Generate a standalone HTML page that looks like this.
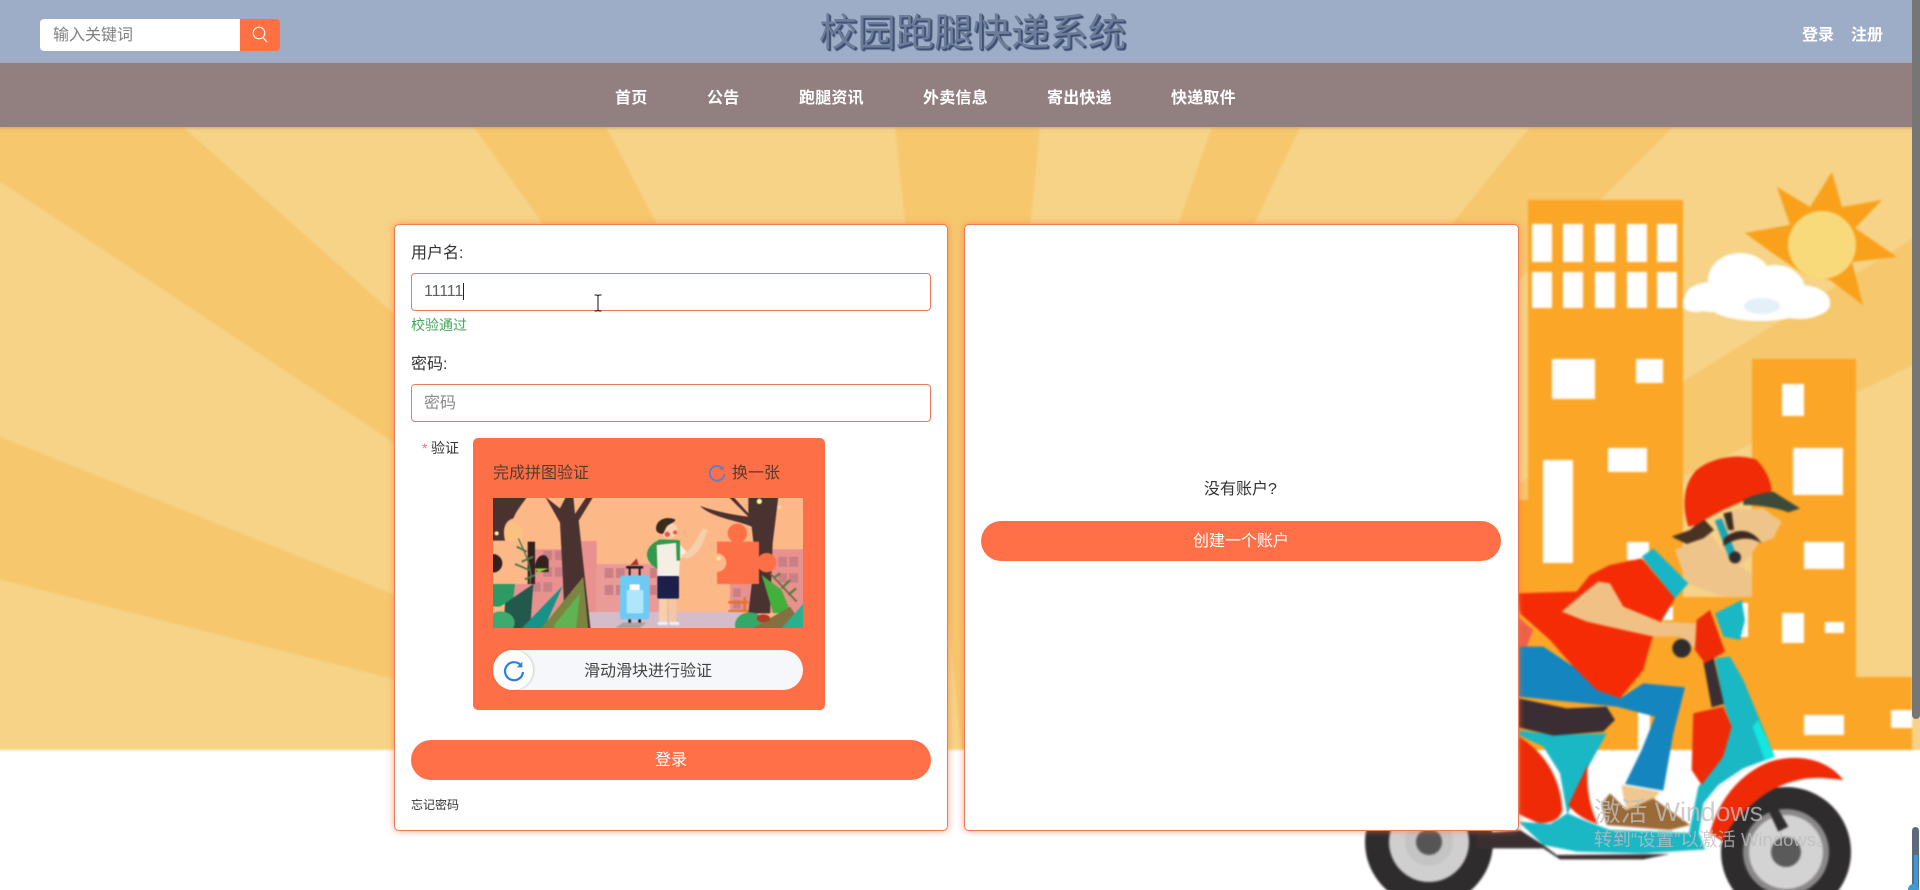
<!DOCTYPE html>
<html lang="zh-CN">
<head>
<meta charset="utf-8">
<title>校园跑腿快递系统</title>
<style>
html,body{margin:0;padding:0;width:1920px;height:890px;overflow:hidden;background:#fff;font-family:"Liberation Sans","Noto Sans CJK SC",sans-serif;}
.a{position:absolute;white-space:nowrap;}
.t{position:absolute;white-space:nowrap;line-height:24px;height:24px;}
#bg{position:absolute;left:0;top:0;}
#hd{position:absolute;left:0;top:0;width:1920px;height:63px;background:#9eadc7;}
#nv{position:absolute;left:0;top:63px;width:1920px;height:64px;background:#928080;box-shadow:0 1px 3px rgba(120,90,70,.35);}
.nav{color:#fff;font-weight:700;font-size:16px;top:87px;letter-spacing:.2px;}
.card{position:absolute;top:224px;height:605px;background:#fff;border:1px solid #ea7a58;border-radius:5px;box-shadow:0 0 7px rgba(255,112,67,.65);box-sizing:content-box;}
.inp{position:absolute;left:411px;width:518px;height:36px;border:1px solid #e8795a;border-radius:4px;background:#fff;}
.btn{position:absolute;height:40px;background:#ff7048;border-radius:20px;color:#fff;font-size:16px;line-height:42px;text-align:center;}
</style>
</head>
<body>
<svg id="bg" width="1920" height="890" viewBox="0 0 1920 890" xmlns="http://www.w3.org/2000/svg">
<g style="filter:blur(1px)">
<rect x="-5" y="100" width="1930" height="650" fill="#f6d386"/>
<g fill="#f6c76d">
<polygon points="970,825 183,127 -5,127 -5,178"/>
<polygon points="970,825 -5,435 -5,578"/>
<polygon points="970,825 474,127 606,127"/>
<polygon points="970,825 895,127 1040,127"/>
<polygon points="970,825 1212,127 1300,127"/>
<polygon points="970,825 1530,127 1673,127"/>
<polygon points="970,825 1925,231 1925,359"/>
</g>
<rect x="-5" y="750" width="1930" height="140" fill="#fff"/>
<!-- sun -->
<polygon fill="#f9a11b" points="1832,172 1842,207 1882,200 1855,228 1897,257 1852,262 1863,305 1830,280 1805,275 1775,255 1745,233 1790,225 1777,187 1810,207"/>
<circle cx="1822" cy="245" r="34" fill="#f9da7a"/>
<!-- cloud -->
<g fill="#fff">
<ellipse cx="1740" cy="280" rx="32" ry="27"/><ellipse cx="1775" cy="290" rx="30" ry="25"/><ellipse cx="1800" cy="302" rx="30" ry="17"/><ellipse cx="1712" cy="297" rx="27" ry="15"/><ellipse cx="1696" cy="303" rx="15" ry="9"/><ellipse cx="1760" cy="306" rx="50" ry="15"/><ellipse cx="1812" cy="304" rx="18" ry="12"/>
</g>
<ellipse cx="1762" cy="306" rx="18" ry="8" fill="#e4f0f8"/>
<!-- buildings -->
<g fill="#fba626">
<rect x="1528" y="200" width="155" height="550"/>
<rect x="1752" y="359" width="104" height="391"/>
<rect x="1500" y="597" width="356" height="153"/>
<rect x="1856" y="677" width="56" height="73"/>
<rect x="1500" y="500" width="30" height="250"/>
</g>
<g fill="#fff">
<rect x="1532" y="224" width="20" height="38"/><rect x="1563" y="224" width="20" height="38"/><rect x="1595" y="224" width="20" height="38"/><rect x="1627" y="224" width="20" height="38"/><rect x="1657" y="224" width="20" height="38"/>
<rect x="1532" y="272" width="20" height="36"/><rect x="1563" y="272" width="20" height="36"/><rect x="1595" y="272" width="20" height="36"/><rect x="1627" y="272" width="20" height="36"/><rect x="1657" y="272" width="20" height="36"/>
<rect x="1552" y="359" width="43" height="40"/><rect x="1636" y="359" width="27" height="24"/>
<rect x="1543" y="460" width="30" height="103"/><rect x="1608" y="448" width="39" height="24"/>
<rect x="1782" y="384" width="22" height="32"/><rect x="1793" y="448" width="50" height="47"/>
<rect x="1804" y="542" width="40" height="27"/><rect x="1782" y="613" width="22" height="30"/><rect x="1825" y="622" width="19" height="11"/>
<rect x="1804" y="715" width="40" height="20"/><rect x="1891" y="710" width="21" height="18"/>
<rect x="1627" y="542" width="22" height="18"/><rect x="1638" y="712" width="12" height="38"/><rect x="1662" y="607" width="11" height="13"/><rect x="1738" y="603" width="10" height="34"/>
</g>
<!-- wheels -->
<circle cx="1429" cy="842" r="64" fill="#2f2c2e"/><circle cx="1429" cy="842" r="40" fill="#d0cfcf"/><circle cx="1429" cy="842" r="24" fill="#c5c4c4"/><circle cx="1429" cy="842" r="13" fill="#555"/>
<circle cx="1786" cy="852" r="65" fill="#2f2c2e"/><circle cx="1786" cy="852" r="43" fill="#8a8888"/><circle cx="1786" cy="852" r="37" fill="#d4d3d3"/><circle cx="1786" cy="852" r="15" fill="#5b5a5a"/>
<!-- rider: coordinates are 3x around (1510,450) -->
<g transform="translate(1510,450) scale(.33333)">
<path fill="#3a2f30" d="M-100 1150 L30 1140 L100 1185 L140 1215 L480 1212 L400 1228 L150 1228 L100 1195 L-100 1195Z"/>
<path fill="#2f2c2e" d="M770 1070 L800 1070 L835 1130 L805 1145Z"/>
<!-- teal body -->
<path fill="#1ab8c4" d="M25 840 L130 855 L290 850 L230 960 L172 1095 L150 970 L100 890 L25 855Z"/>
<path fill="#1ab8c4" d="M25 1115 L120 1122 L172 1090 L240 1118 L300 1140 L560 1150 L585 1198 L400 1210 L200 1205 L100 1185Z"/>
<path fill="#1ab8c4" d="M615 625 L660 620 L700 690 L795 920 L700 955 L625 1005 L580 1060 L567 1150 L585 1198 L535 1160 L565 1010 L640 920 L665 830 L640 760Z"/>
<path fill="#16e6e0" d="M745 810 L795 920 L765 932 L728 830Z"/>
<!-- column -->
<polygon fill="#3a2f33" points="580,635 610,620 642,762 605,772"/>
<!-- reds -->
<path fill="#ef2a06" d="M25 860 C80 890 150 960 157 1080 C150 1112 110 1125 80 1117 L25 1092Z"/>
<path fill="#ef2a06" d="M235 940 C225 1000 240 1080 265 1122 C220 1110 190 1085 175 1065Z"/>
<path fill="#ef2a06" d="M550 790 L640 770 L665 830 L640 920 L575 1005 L545 960Z"/>
<path fill="#ef2a06" d="M600 1150 C625 1050 690 970 780 935 C860 910 950 925 1000 990 L950 985 C860 975 780 1015 730 1060 C680 1100 650 1140 640 1175Z"/>
<!-- foot -->
<polygon fill="#f0c88f" points="335,1005 450,1025 430,1050 350,1080 340,1040"/>
<path fill="#9a6a37" d="M275 1060 L300 1030 L350 1080 L430 1045 L540 1125 L480 1140 L290 1125Z"/>
<!-- pants -->
<path fill="#1485bf" d="M25 590 L100 590 L190 650 L260 720 L330 745 L400 700 L525 712 L490 850 L460 1022 L345 1002 L395 900 L435 800 L320 770 L25 740Z"/>
<!-- seat -->
<path fill="#3a2d33" d="M25 745 L170 775 L290 770 L315 810 L280 845 L130 857 L25 832Z"/>
<!-- shirt -->
<path fill="#f52b05" d="M22 430 L200 425 L240 375 L300 345 L395 325 L495 445 L450 520 L425 570 L400 660 L330 745 L260 720 L190 650 L120 570 L30 490Z"/>
<path fill="#f0604a" d="M22 500 L70 540 L50 590 L22 590Z"/>
<!-- neck + face -->
<path fill="#efc48a" d="M495 300 L600 250 L660 330 L725 370 L725 440 L640 440 L530 400Z"/>
<path fill="#efc48a" d="M610 210 L680 180 L760 175 L815 215 L790 265 L745 280 L720 320 L690 345 L650 330 L630 260Z"/>
<!-- collar -->
<polygon fill="#18b5c6" points="395,320 430,295 535,400 495,445"/>
<!-- arm -->
<path fill="#f0c084" d="M155 485 L220 430 L265 395 L300 400 L340 470 L450 515 L555 520 L585 545 L575 595 L545 590 L510 560 L430 560 L340 540 L230 515Z"/>
<!-- handle / headlight -->
<path fill="#ef2a06" d="M560 510 L600 480 L645 605 L585 640 L555 600Z"/>
<path fill="#1ab8c4" d="M615 490 L695 450 L705 510 L690 570 L640 560Z"/>
<circle cx="515" cy="595" r="28" fill="#2f2c2e"/>
<!-- hair -->
<path fill="#4a3322" d="M485 260 L540 240 L580 205 L612 240 L580 265 L530 282Z"/>
<path fill="#3a2a20" d="M640 190 L665 185 L672 240 L655 240Z"/>
<!-- helmet -->
<path fill="#f02b05" d="M535 230 C515 170 520 100 560 60 C610 20 690 10 740 30 C770 60 785 100 785 125 C710 145 620 185 560 225Z"/>
<path fill="#3c4a3a" d="M700 150 C730 135 760 128 790 125 L870 175 L835 187 C790 170 740 165 700 165Z"/>
<!-- headset, mustache -->
<polygon fill="#18a5b5" points="615,212 635,205 682,320 660,332"/>
<circle cx="675" cy="322" r="18" fill="#2f2c2e"/>
<path fill="#3b2a20" d="M640 268 C665 240 720 225 755 280 C720 258 680 262 640 288Z"/>
</g>
</g>
</svg>

<div id="hd"></div>
<div id="nv"></div>

<!-- search -->
<div class="a" style="left:40px;top:19px;width:200px;height:32px;background:#fff;border-radius:4px 0 0 4px;"></div>
<div class="t" style="left:53px;top:24px;font-size:16px;color:#808080;">输入关键词</div>
<div class="a" style="left:240px;top:19px;width:40px;height:32px;background:#ff7043;border-radius:0 4px 4px 0;"></div>
<svg class="a" style="left:240px;top:19px;" width="40" height="32" viewBox="0 0 40 32"><circle cx="19" cy="14" r="5.8" fill="none" stroke="#fff" stroke-width="1.1"/><line x1="23" y1="18.5" x2="27" y2="23" stroke="#fff" stroke-width="1.2"/></svg>

<div class="a" style="left:819px;top:8px;font-size:38.4px;line-height:52px;color:#6d7c97;text-shadow:1px 1px 0 #3f5075,2px 2px 1px #3a4c72;">校园跑腿快递系统</div>
<div class="t" style="left:1802px;top:24px;font-size:16px;font-weight:700;color:#fff;">登录</div>
<div class="t" style="left:1851px;top:24px;font-size:16px;font-weight:700;color:#fff;">注册</div>

<div class="t nav" style="left:615px;">首页</div>
<div class="t nav" style="left:707px;">公告</div>
<div class="t nav" style="left:799px;">跑腿资讯</div>
<div class="t nav" style="left:923px;">外卖信息</div>
<div class="t nav" style="left:1047px;">寄出快递</div>
<div class="t nav" style="left:1171px;">快递取件</div>

<!-- left card -->
<div class="card" style="left:394px;width:552px;"></div>
<div class="t" style="left:411px;top:242px;font-size:16px;color:#333;">用户名:</div>
<div class="inp" style="top:273px;"></div>
<div class="t" style="left:424px;top:280px;font-size:16px;color:#606266;letter-spacing:-1.3px;font-kerning:none;">11111</div>
<div class="a" style="left:463px;top:283px;width:1px;height:17px;background:#222;"></div>
<svg class="a" style="left:592px;top:294px;" width="12" height="18" viewBox="0 0 12 18"><path d="M2.5 1H5L6 2L7 1H9.5M6 2V16M2.5 17H5L6 16L7 17H9.5" fill="none" stroke="#111" stroke-width="1"/></svg>
<div class="t" style="left:411px;top:313px;font-size:14px;color:#43a85a;">校验通过</div>
<div class="t" style="left:411px;top:353px;font-size:16px;color:#333;">密码:</div>
<div class="inp" style="top:384px;"></div>
<div class="t" style="left:424px;top:392px;font-size:16px;color:#8a8a8a;">密码</div>
<div class="t" style="left:422px;top:436px;font-size:14px;color:#f56c6c;">*</div>
<div class="t" style="left:431px;top:436px;font-size:14px;color:#333;">验证</div>

<!-- captcha -->
<div class="a" style="left:473px;top:438px;width:352px;height:272px;background:#fd6f46;border-radius:5px;"></div>
<div class="t" style="left:493px;top:462px;font-size:16px;color:#5a3a2e;">完成拼图验证</div>
<svg class="a" style="left:705px;top:461px;" width="24" height="24" viewBox="0 0 24 24"><path d="M17.5 7.5 A7.3 7.3 0 1 0 19.3 13" fill="none" stroke="#5b7fd6" stroke-width="2"/><path d="M18.6 4.8 L18.6 9 L14.6 9Z" fill="#5b7fd6"/></svg>
<div class="t" style="left:732px;top:462px;font-size:16px;color:#5a3a2e;">换一张</div>

<svg class="a" style="left:493px;top:498px;" width="310" height="130" viewBox="39 24 930 390">
<defs><clipPath id="c"><rect x="39" y="24" width="930" height="390"/></clipPath></defs>
<g clip-path="url(#c)"><g style="filter:blur(1.2px)">
<rect x="30" y="15" width="950" height="410" fill="#fdb888"/>
<!-- pink buildings -->
<rect x="80" y="178" width="230" height="236" fill="#e8918f"/><rect x="250" y="153" width="100" height="261" fill="#e8918f"/>
<rect x="350" y="222" width="210" height="150" fill="#ea9b98"/>
<rect x="840" y="178" width="140" height="190" fill="#e8918f"/><rect x="750" y="282" width="70" height="85" fill="#e8918f"/>
<g fill="#c97f85">
<rect x="92" y="195" width="28" height="28"/><rect x="190" y="182" width="26" height="28"/><rect x="225" y="182" width="24" height="28"/><rect x="190" y="232" width="26" height="28"/><rect x="225" y="232" width="24" height="28"/>
<rect x="190" y="277" width="26" height="28"/><rect x="158" y="277" width="24" height="28"/>
<rect x="374" y="234" width="26" height="30"/><rect x="408" y="234" width="26" height="30"/><rect x="374" y="285" width="26" height="30"/><rect x="408" y="285" width="26" height="30"/><rect x="510" y="234" width="20" height="30"/><rect x="510" y="285" width="20" height="30"/>
<rect x="895" y="200" width="26" height="30"/><rect x="928" y="200" width="26" height="30"/><rect x="895" y="250" width="26" height="28"/><rect x="928" y="250" width="26" height="28"/><rect x="760" y="295" width="22" height="26"/><rect x="760" y="330" width="22" height="26"/>
</g>
<!-- ground -->
<rect x="320" y="366" width="460" height="60" fill="#d4bccb"/>
<polygon points="405,414 430,398 500,398 480,414" fill="#a9a0a6"/>
<!-- left tree -->
<path fill="#4a3230" d="M195 20 L240 55 L258 20 L280 20 L285 72 L320 20 L340 20 L296 92 L312 240 L332 420 L255 420 L248 250 L240 98 L212 48Z"/>
<path fill="#4a3230" d="M30 15 L145 15 C125 45 110 60 100 85 C80 90 65 110 75 152 L30 152Z"/>
<!-- left puzzle block -->
<rect x="30" y="155" width="135" height="127" fill="#fdb888"/>
<circle cx="100" cy="127" r="28" fill="#f9c37f"/>
<rect x="143" y="155" width="22" height="127" fill="#33211f"/>
<circle cx="39" cy="220" r="28" fill="#33211f"/>
<path d="M165 232 C165 200 195 180 206 210 L206 246 L170 246Z" fill="#33211f"/>
<polygon points="165,235 206,235 175,248" fill="#8ccc3d"/>
<path d="M115 145 C135 190 160 235 150 280" fill="none" stroke="#4f7a4b" stroke-width="4"/>
<path d="M110 170 L140 185 M160 200 L125 215 M105 222 L148 240 M165 255 L135 268" stroke="#4f7a4b" stroke-width="6" fill="none"/>
<circle cx="50" cy="130" r="6" fill="#fbf1b0"/>
<!-- right trees -->
<path fill="#4a3230" d="M805 20 L895 20 L878 160 L870 370 L805 370 L825 200 L815 110 C770 90 700 85 660 48 C710 65 760 75 805 80 L745 20 L760 20 L805 70Z"/>
<!-- right puzzle hole -->
<g fill="#fd6f46"><rect x="711" y="155" width="126" height="127"/><circle cx="772" cy="130" r="29"/><circle cx="860" cy="218" r="29"/></g>
<circle cx="711" cy="218" r="28" fill="#fdb888"/><circle cx="716" cy="205" r="7" fill="#fbe59a"/>
<circle cx="838" cy="34" r="8" fill="#f4edb0"/><circle cx="898" cy="52" r="6" fill="#f7d39a"/>
<!-- bench -->
<rect x="745" y="333" width="60" height="8" fill="#e8742a"/><rect x="790" y="322" width="8" height="40" fill="#e8742a"/><rect x="745" y="360" width="60" height="6" fill="#e8742a"/>
<!-- right plants -->
<polygon points="845,255 905,300 932,366 880,370" fill="#43b03b"/>
<path d="M870 250 L950 335" stroke="#6a6a3f" stroke-width="5"/>
<path d="M880 265 L900 250 M905 295 L930 270 M925 315 L948 295" stroke="#5f7d3f" stroke-width="7"/>
<ellipse cx="810" cy="405" rx="45" ry="38" fill="#34a866"/>
<polygon points="810,420 930,350 980,420" fill="#847142"/>
<polygon points="900,420 980,330 980,420" fill="#2bb08f"/>
<ellipse cx="850" cy="385" rx="20" ry="12" fill="#b53a26"/>
<!-- left plants -->
<polygon points="30,282 105,282 100,325 60,350 30,350" fill="#2d9a63"/>
<polygon points="75,340 160,282 150,420 70,420" fill="#23594d"/>
<ellipse cx="62" cy="398" rx="42" ry="34" fill="#3dab6d"/>
<polygon points="120,420 248,288 190,420" fill="#179287"/>
<polygon points="180,420 310,260 325,420" fill="#7b8540"/>
<polygon points="222,405 300,310 288,420 225,420" fill="#5fb352"/>
<!-- suitcase -->
<rect x="446" y="232" width="6" height="26" fill="#222"/><rect x="476" y="232" width="6" height="26" fill="#222"/><rect x="438" y="228" width="52" height="8" rx="4" fill="#222"/>
<polygon points="450,226 470,205 476,225" fill="#a8362a"/>
<rect x="420" y="256" width="88" height="132" rx="10" fill="#6ccbf5"/>
<rect x="440" y="300" width="50" height="70" rx="5" fill="#aee6fa"/>
<rect x="449" y="283" width="30" height="17" rx="2" fill="#fff"/>
<rect x="445" y="388" width="8" height="10" fill="#222"/><rect x="475" y="388" width="8" height="10" fill="#222"/>
<!-- person -->
<path fill="#2f9a4c" d="M540 148 L595 150 L600 212 L560 245 C520 240 495 210 502 185 C508 165 525 155 540 148Z"/>
<rect x="537" y="320" width="24" height="78" fill="#f6cfac"/><rect x="566" y="320" width="24" height="78" fill="#f3c7a3"/>
<path fill="#f4efe2" d="M530 165 L595 158 L625 192 L600 205 L597 260 L533 260Z"/>
<path fill="#2f9a4c" d="M588 150 L600 152 L600 212 L590 212Z"/>
<path fill="#f6cfac" d="M600 196 C630 190 650 150 668 115 L682 120 C670 165 650 200 620 206Z"/>
<rect x="532" y="258" width="65" height="68" rx="3" fill="#1c1f4a"/>
<path fill="#f7d2b5" d="M545 110 C555 95 585 92 592 115 C592 135 575 150 560 145 C548 140 543 125 545 110Z"/>
<path fill="#3a2a20" d="M528 115 C530 90 555 78 585 88 C590 95 570 100 562 108 C555 115 555 125 548 132 C535 130 528 125 528 115Z"/>
<circle cx="562" cy="133" r="8" fill="#e5574e"/><circle cx="585" cy="127" r="6" fill="#e5574e"/>
<rect x="533" y="396" width="30" height="9" rx="3" fill="#eef"/><rect x="568" y="396" width="30" height="9" rx="3" fill="#eef"/>
</g></g>
</svg>

<!-- slider -->
<div class="a" style="left:493px;top:650px;width:310px;height:40px;background:#f5f7fa;border-radius:20px;"></div>
<div class="a" style="left:493px;top:650px;width:40px;height:40px;background:#fff;border-radius:20px;box-shadow:1px 0 2px rgba(0,0,0,.18);"></div>
<svg class="a" style="left:501px;top:658px;" width="26" height="26" viewBox="0 0 26 26"><path d="M20 7.5 A9 9 0 1 0 22 14" fill="none" stroke="#2a7fe0" stroke-width="2.2"/><path d="M21.3 3.6 L21.3 9.4 L15.8 9.4Z" fill="#2a7fe0"/></svg>
<div class="t" style="left:584px;top:660px;font-size:16px;color:#444;">滑动滑块进行验证</div>

<div class="btn" style="left:411px;top:740px;width:520px;">登录</div>
<div class="t" style="left:411px;top:793px;font-size:12px;color:#333;">忘记密码</div>

<!-- right card -->
<div class="card" style="left:964px;width:553px;"></div>
<div class="t" style="left:1204px;top:478px;font-size:16px;color:#333;">没有账户?</div>
<div class="btn" style="left:981px;top:521px;width:520px;">创建一个账户</div>

<!-- watermark -->
<div class="t" style="left:1594px;top:800px;font-size:26.7px;color:rgba(190,190,190,.78);">激活 Windows</div>
<div class="t" style="left:1594px;top:828px;font-size:18.5px;color:rgba(190,190,190,.78);">转到“设置”以激活 Windows。</div>

<!-- scrollbar -->
<div class="a" style="left:1912px;top:0;width:8px;height:719px;background:#767676;border-radius:0 0 4px 4px;"></div>
<div class="a" style="left:1912px;top:827px;width:7px;height:63px;background:#5e6a78;border-radius:4px 4px 0 0;"></div>
<div class="a" style="left:1914px;top:855px;width:4px;height:35px;background:#3d9ad6;"></div>
<div class="a" style="left:1908px;top:884px;width:11px;height:6px;background:#3d9ad6;border-radius:6px 6px 0 0;"></div>
</body>
</html>
